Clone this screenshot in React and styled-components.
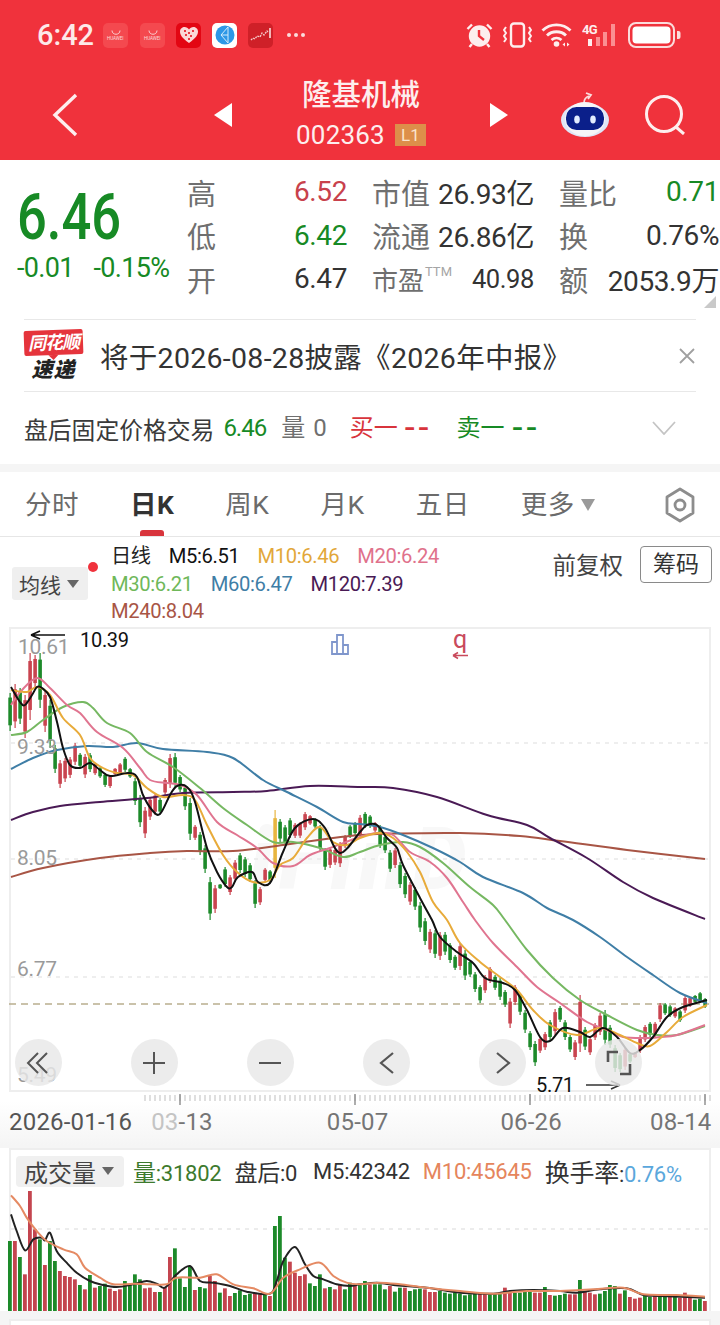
import React from 'react';
import styled, { createGlobalStyle } from 'styled-components';

const GREEN = '#178a25';
const RED = '#c8414c';
const FONT = 'Roboto, "Noto Sans CJK SC", sans-serif';

const GlobalStyle = createGlobalStyle`
  html, body { margin: 0; padding: 0; background: #fff; }
  * { box-sizing: border-box; }
`;

const Page = styled.div`
  width: 720px;
  height: 1325px;
  overflow: hidden;
  background: #fff;
  font-family: ${FONT};
  color: #333;
`;

/* header */
const Header = styled.header`
  background: #f0323c;
  color: #fff;
  height: 160px;
`;
const StatusBar = styled.div`
  height: 70px;
  display: flex;
  align-items: center;
  padding-left: 37px;
`;
const Time = styled.span`
  font-size: 29px;
  font-weight: 500;
  line-height: 34px;
  color: #fde9e9;
  width: 66px;
`;
const AppIcon = styled.div`
  width: 25px;
  height: 25px;
  border-radius: 5px;
  margin-right: ${p => p.$gap}px;
  background: ${p => p.$bg};
  display: flex;
  flex-direction: column;
  align-items: center;
  justify-content: center;
  flex: none;
`;
const HwText = styled.span`
  font-size: 5px;
  line-height: 6px;
  color: #fbdcdc;
  transform: scaleX(.9);
`;
const Dots = styled.span`
  display: flex;
  gap: 3px;
  width: 176px;
  margin-left: 1px;
  span {
    width: 4px;
    height: 4px;
    border-radius: 50%;
    background: #fbdcdc;
  }
`;
const StatusIcons = styled.div`
  display: flex;
  align-items: center;
  gap: 9.5px;
  margin-left: 3px;
`;
const NavBar = styled.nav`
  height: 90px;
  display: flex;
  align-items: center;
  padding-left: 52px;
`;
const BackIcon = styled.svg`
  margin-right: 136px;
  flex: none;
`;
const Tri = styled.div`
  width: 0;
  height: 0;
  flex: none;
  border-top: 12px solid transparent;
  border-bottom: 12px solid transparent;
  border-${p => (p.$left ? 'right' : 'left')}: 18px solid #fff;
`;
const TitleBlock = styled.div`
  width: 258px;
  display: flex;
  flex-direction: column;
  align-items: center;
  margin-top: -6px;
`;
const Title = styled.div`
  font-size: 29.5px;
  line-height: 40px;
  font-weight: 500;
  color: #fdeeee;
  margin-bottom: 5px;
`;
const CodeRow = styled.div`
  display: flex;
  align-items: center;
  gap: 10px;
  height: 30px;
`;
const Code = styled.span`
  font-size: 26px;
  color: #fdeeee;
  letter-spacing: .2px;
`;
const Badge = styled.span`
  width: 31px;
  height: 22px;
  background: #dd8f4a;
  color: #fbe3cc;
  font-size: 17px;
  line-height: 22px;
  text-align: center;
`;
const RobotIcon = styled.svg`
  margin-left: 53px;
  flex: none;
`;
const SearchIcon = styled.svg`
  margin-left: 36px;
  flex: none;
`;

/* quote */
const Quote = styled.section`
  position: relative;
  height: 159px;
  display: flex;
  padding: 10px 0 0 17px;
`;
const PriceBlock = styled.div`
  width: 170px;
  color: ${GREEN};
`;
const Price = styled.div`
  font-size: 64px;
  line-height: 68px;
  font-weight: 500;
  margin-top: 14px;
  transform: scaleX(.82);
  transform-origin: left center;
`;
const ChangeRow = styled.div`
  display: flex;
  gap: 20px;
  font-size: 27px;
  line-height: 30px;
  margin-top: 1px;
  letter-spacing: -.7px;
`;
const StatGrid = styled.div`
  display: grid;
  grid-template-columns: 160px 162px 160px;
  grid-auto-rows: 43.5px;
  column-gap: 25px;
`;
const Stat = styled.div`
  display: flex;
  justify-content: space-between;
  align-items: center;
`;
const StatLabel = styled.span`
  font-size: ${p => p.$size || 29}px;
  color: #6f6f6f;
  display: flex;
  align-items: flex-start;
`;
const Sup = styled.span`
  font-size: 13px;
  line-height: 24px;
  color: #a5a5a5;
  margin-left: 1px;
`;
const StatValue = styled.span`
  font-size: ${p => p.$size || 28}px;
  letter-spacing: -.4px;
  color: ${p => p.$color || '#333'};
`;
const Fold = styled.div`
  position: absolute;
  right: 4px;
  bottom: 11px;
  width: 0;
  height: 0;
  border-left: 12px solid transparent;
  border-bottom: 12px solid #c9c9c9;
`;
const Row = styled.div`
  margin: 0 24px;
  border-top: 1px solid #e8e8e8;
  height: ${p => p.$h}px;
  display: flex;
  align-items: center;
`;
const Logo = styled.div`
  width: 59px;
  height: 52px;
  margin-right: 17px;
  display: flex;
  flex-direction: column;
  align-items: center;
`;
const LogoTop = styled.div`
  position: relative;
  width: 59px;
  height: 25px;
  background: #e5343c;
  border-radius: 2px;
  transform: rotate(-2deg);
  color: #fff;
  font-size: 18px;
  line-height: 25px;
  font-weight: 700;
  font-style: italic;
  text-align: center;
  letter-spacing: -1px;
  &::after {
    content: '';
    position: absolute;
    left: 24px;
    bottom: -5px;
    border-top: 5px solid #e5343c;
    border-left: 5px solid transparent;
    border-right: 5px solid transparent;
  }
`;
const LogoBottom = styled.div`
  color: #222;
  font-size: 21px;
  line-height: 26px;
  margin-top: 2px;
  font-weight: 900;
  font-style: italic;
  letter-spacing: 1px;
`;
const NoticeText = styled.div`
  font-size: 28.5px;
  color: #333;
  letter-spacing: .3px;
  flex: 1;
  white-space: nowrap;
`;
const AfterLabel = styled.span`
  font-size: 23.8px;
  color: #3a3a3a;
`;
const AfterValue = styled.span`
  font-size: ${p => p.$size || 24}px;
  line-height: 1;
  margin-left: ${p => p.$gap}px;
  color: ${p => p.$color};
  letter-spacing: ${p => p.$ls || 0}px;
`;
const Chevron = styled.svg`
  margin-left: auto;
  margin-right: 20px;
`;
const Band = styled.div`
  height: 8px;
  background: #f5f5f5;
`;

/* tabs */
const Tabs = styled.div`
  height: 65px;
  border-bottom: 1px solid #e6e6e6;
  display: flex;
  align-items: center;
  padding: 2px 24px 0 25px;
  gap: 51px;
`;
const Tab = styled.div`
  position: relative;
  font-size: 26.5px;
  letter-spacing: .5px;
  line-height: 62px;
  color: ${p => (p.$active ? '#333' : '#6b6b6b')};
  font-weight: ${p => (p.$active ? 700 : 400)};
  display: flex;
  align-items: center;
  &::after {
    content: '';
    display: ${p => (p.$active ? 'block' : 'none')};
    position: absolute;
    left: 10px;
    bottom: 0;
    width: 24px;
    height: 6px;
    border-radius: 3px 3px 0 0;
    background: #d8343c;
  }
`;
const TabCaret = styled.i`
  border-top: 12px solid #9a9a9a;
  border-left: 7.5px solid transparent;
  border-right: 7.5px solid transparent;
  margin-left: 6px;
`;
const HexIcon = styled.svg`
  margin-left: auto;
  margin-right: 0;
`;

/* indicators */
const Indicators = styled.div`
  position: relative;
  height: 90px;
  display: flex;
  padding: 6px 8px 0 12px;
`;
const Picker = styled.div`
  width: 76px;
  height: 33px;
  margin-top: 24px;
  background: #efefef;
  border-radius: 3px;
  display: flex;
  align-items: center;
  padding-left: 7px;
  font-size: 21px;
  color: #444;
`;
const Caret = styled.i`
  border-top: 8px solid #666;
  border-left: 6px solid transparent;
  border-right: 6px solid transparent;
  margin-left: 6px;
`;
const RedDot = styled.i`
  position: absolute;
  left: 88px;
  top: 25px;
  width: 10px;
  height: 10px;
  border-radius: 50%;
  background: #f0323c;
`;
const Legend = styled.div`
  margin-left: 23px;
  flex: 1;
`;
const LegendRow = styled.div`
  display: flex;
  gap: 18px;
  height: 27.5px;
  line-height: 27.5px;
  white-space: nowrap;
`;
const LegendItem = styled.span`
  font-size: 20.2px;
  letter-spacing: -.35px;
  color: ${p => p.$color};
`;
const Adjust = styled.span`
  font-size: 23.5px;
  color: #444;
  margin-top: 7px;
  margin-right: 17px;
  line-height: 32px;
`;
const ChipBtn = styled.div`
  width: 72px;
  height: 37px;
  border: 1px solid #8a8a8a;
  border-radius: 4px;
  font-size: 23px;
  line-height: 35px;
  text-align: center;
  margin-top: 3px;
  color: #333;
`;

/* chart */
const ChartBox = styled.div`
  position: relative;
  margin: 0 9px;
  height: 465px;
  border: 2px solid #eeeeee;
  svg { display: block; overflow: visible; position: relative; }
`;
const Overlay = styled.span`
  position: absolute;
  left: ${p => p.$x - 11}px;
  top: ${p => p.$y - 629}px;
  transform: translateY(-50%);
  font-size: ${p => p.$size || 21}px;
  line-height: 1;
  color: ${p => p.$color || '#9a9a9a'};
  letter-spacing: -.3px;
  white-space: nowrap;
`;
const Watermark = styled(Overlay)`
  font-style: italic;
  font-weight: 900;
  font-size: 86px;
  color: #f8f8f8;
  letter-spacing: 6px;
`;
const Controls = styled.div`
  position: absolute;
  left: 3.5px;
  top: 410px;
  display: flex;
  gap: 69.2px;
`;
const RoundBtn = styled.div`
  width: 47px;
  height: 47px;
  border-radius: 50%;
  background: rgba(232, 232, 232, .82);
  display: flex;
  align-items: center;
  justify-content: center;
`;
const Axis = styled.div`
  height: 55px;
  background: linear-gradient(#fff 15%, #f5f5f5 95%);
  svg { display: block; margin-top: 1px; }
`;
const Dates = styled.div`
  display: flex;
  margin-top: 3px;
  font-size: 24px;
  line-height: 28px;
  color: #757575;
  letter-spacing: .2px;
`;
const DateLabel = styled.span`
  margin-left: ${p => p.$gap}px;
  color: ${p => p.$color || 'inherit'};
`;
const Faded = styled.span`
  color: #c4c4c4;
`;
const VolumeBox = styled.div`
  margin: 0 9px;
  height: 163px;
  border: 2px solid #eeeeee;
  border-bottom: 0;
  svg { display: block; overflow: visible; }
`;
const VolumeHead = styled.div`
  height: 39px;
  display: flex;
  align-items: center;
  padding-top: 3px;
  padding-left: 5px;
  font-size: 22px;
  white-space: nowrap;
`;
const VolumePicker = styled.div`
  width: 108px;
  height: 31px;
  background: #f0f0f0;
  border-radius: 4px;
  padding-left: 8px;
  margin-right: 9px;
  display: flex;
  align-items: center;
  font-size: 24px;
  color: #444;
`;
const VolText = styled.span`
  margin-right: ${p => p.$gap || 13}px;
  letter-spacing: -.25px;
  color: ${p => p.$color || '#333'};
`;
const VolCn = styled.span`
  font-size: ${p => p.$size || 23}px;
`;
const VolRate = styled.span`
  color: #5aa7dc;
`;
const NextPanel = styled.div`
  margin: 8px 9px 0;
  height: 20px;
  border: 2px solid #eeeeee;
  background: #fff;
`;
const BottomBand = styled.div`
  background: #f5f5f5;
  height: 30px;
  overflow: hidden;
`;

const candles = [
  [693,731,'g'],[684,728,'r'],[688,724,'g'],[695,738,'r'],[653,720,'r'],[655,688,'r'],[653,708,'g'],[690,732,'r'],[700,748,'g'],[745,773,'g'],
  [760,788,'r'],[758,782,'r'],[757,778,'r'],[743,765,'r'],[753,768,'g'],[754,778,'r'],[753,772,'g'],[763,775,'r'],[767,778,'g'],[773,787,'g'],
  [775,788,'r'],[768,775,'r'],[763,775,'r'],[757,772,'g'],[768,778,'g'],[778,805,'g'],[795,827,'g'],[807,838,'r'],[797,820,'r'],[793,815,'r'],
  [798,814,'g'],[778,795,'r'],[754,788,'r'],[753,788,'g'],[775,792,'g'],[785,810,'g'],[798,840,'g'],[825,840,'r'],[832,855,'g'],[845,873,'g'],
  [877,920,'g'],[885,913,'r'],[884,889,'g'],[867,887,'g'],[875,895,'r'],[860,882,'r'],[853,873,'g'],[857,877,'g'],[863,882,'g'],[880,908,'g'],
  [887,905,'r'],[868,882,'r'],[870,882,'g'],[810,878,'y'],[819,842,'g'],[825,845,'g'],[818,838,'g'],[823,838,'r'],[822,838,'r'],[812,830,'r'],
  [815,825,'r'],[818,828,'g'],[825,852,'g'],[848,870,'g'],[847,868,'r'],[848,865,'r'],[842,867,'r'],[835,848,'r'],[825,838,'g'],[822,835,'g'],
  [815,838,'r'],[812,828,'g'],[815,828,'g'],[822,832,'r'],[825,848,'g'],[835,853,'g'],[850,872,'g'],[848,868,'r'],[862,888,'g'],[873,898,'g'],
  [882,905,'r'],[887,910,'g'],[902,932,'g'],[918,945,'g'],[929,953,'r'],[930,958,'g'],[932,960,'r'],[932,955,'g'],[943,963,'g'],[955,970,'g'],
  [943,970,'r'],[950,980,'g'],[960,977,'g'],[972,992,'g'],[985,1003,'g'],[975,993,'r'],[967,983,'r'],[975,990,'g'],[978,1000,'g'],[990,1007,'g'],
  [998,1028,'r'],[985,1005,'r'],[993,1015,'g'],[1010,1033,'g'],[1031,1050,'g'],[1041,1066,'g'],[1037,1053,'r'],[1032,1050,'r'],[1020,1040,'g'],[1009,1035,'r'],
  [1006,1022,'g'],[1020,1040,'g'],[1035,1052,'g'],[1040,1060,'r'],[995,1052,'r'],[1027,1050,'g'],[1037,1055,'r'],[1023,1040,'r'],[1013,1035,'r'],[1010,1045,'g'],
  [1025,1048,'g'],[1045,1072,'g'],[1053,1072,'g'],[1047,1070,'r'],[1053,1063,'g'],[1052,1058,'r'],[1035,1053,'r'],[1025,1042,'r'],[1022,1037,'g'],[1022,1037,'r'],
  [1003,1022,'r'],[1003,1015,'g'],[1005,1017,'g'],[1007,1018,'r'],[1010,1022,'g'],[996,1013,'r'],[997,1007,'r'],[995,1003,'g'],[992,1003,'g'],[998,1008,'g'],
];

const lines = [
  { color: '#a85545', pts: '11,877 43,868 100,858 150,853 187,851 233,851 283,845 333,838 360,835 393,833.5 460,833 520,836 560,841 627,850 705,859' },
  { color: '#4a1a55', pts: '11,820 33,812 60,806 100,802 147,798 183,793 233,792 267,791 310,786 360,787 393,788 437,797 487,815 527,825 550,838 587,858 623,882 653,898 705,919' },
  { color: '#3f7ea6', pts: '11,769 33,758 57,750 87,746 113,747 137,743 163,749 207,752 233,758 263,780 287,792 317,807 343,822 360,824 380,827 403,835 433,848 460,862 483,877 523,893 547,908 573,920 600,937 627,957 653,975 680,993 707,1003' },
  { color: '#76b862', pts: '11,735 27,732 43,720 63,707 83,702 93,708 107,723 130,733 147,752 173,767 200,788 223,808 247,825 273,842 293,842 320,848 343,857 360,852 380,845 403,842 420,847 443,863 470,887 493,905 505,920 527,950 553,978 580,1000 607,1015 637,1030 657,1035 677,1035 705,1026' },
  { color: '#e07590', pts: '11,705 22,690 37,678 50,688 67,705 80,713 97,732 123,748 140,768 150,780 167,783 180,785 197,795 217,822 237,835 257,848 273,863 293,866 310,855 330,848 360,837 377,833 393,835 410,852 430,862 447,878 463,902 475,920 493,943 517,967 537,987 560,1003 587,1022 607,1030 623,1037 647,1038 660,1037 677,1035 705,1025' },
  { color: '#e8ab3a', pts: '11,690 27,692 37,687 50,695 63,718 80,735 90,758 103,768 117,773 133,775 147,788 163,797 183,795 195,800 207,825 223,855 237,872 253,882 270,880 280,865 293,858 307,838 320,827 333,842 347,845 360,838 380,833 393,838 407,852 420,872 433,902 447,920 460,943 480,962 500,977 517,990 533,1010 550,1025 577,1035 600,1028 620,1035 637,1043 650,1046 667,1032 683,1017 707,1005' },
  { color: '#111', pts: '11,687 20,702 25,705 32,695 37,687 42,688 50,697 57,722 63,748 70,765 80,768 90,763 100,770 110,776 128,773 137,777 143,795 152,810 160,814 170,795 177,786 187,787 195,802 207,848 217,872 227,887 232,887 238,877 252,872 258,882 270,883 283,852 295,828 313,819 325,828 340,853 360,832 367,825 377,825 387,838 397,848 403,865 420,898 432,920 440,937 457,952 473,963 485,978 503,983 515,990 527,1010 540,1037 550,1041 563,1028 580,1032 590,1037 603,1028 617,1037 630,1053 640,1050 653,1037 667,1017 683,1007 707,1000' },
];

const volTops = [
  300,300,348,400,150,265,295,372,300,360, 390,405,408,415,432,445,402,440,435,428,
  443,450,445,420,430,400,415,442,440,453, 453,440,348,322,412,438,375,447,438,442,
  405,420,455,442,465,456,448,462,458,455, 460,457,465,255,225,350,362,395,405,400,
  427,435,400,442,438,445,430,445,425,435, 432,
  420,430,430,430,445,435,452,440,440,450, 445,443,445,453,453,450,455,458,455,458,
  463,460,455,458,458,460,458,455,440,452, 455,455,452,450,455,455,438,462,464,462,
  458,460,460,417,452,455,460,458,450,432, 435,458,448,468,473,470,465,468,465,465,
  468,468,462,470,455,470,476,473,480,
];
const volColors = 'grgrrrgrggrrrrgrgrggrrrggggrrrgrrggggrggrrgrrggggrrgrgggrrrrgggrgrrggr' +
  'ggrgggrggrgggrrrggggggggrrgggrrggggrrgrgggrrgrrrggggrgrrrggrggrgrrrgg';

const volLines = [
  { color: '#222', pts: [[33,220],[50,270],[75,328],[100,295],[125,290],[135,298],[150,275],[170,330],[200,365],[230,395],[270,420],[300,430],[350,438],[400,430],[440,420],[470,428],[495,440],[530,400],[570,375],[600,420],[640,425],[690,435],[740,452],[810,458],[830,420],[850,360],[885,318],[915,370],[940,405],[970,415],[1010,430],[1050,435],[1080,430],[1130,425],[1180,432],[1280,440],[1380,455],[1480,458],[1530,450],[1600,447],[1680,450],[1730,455],[1800,445],[1880,442],[1930,462],[1980,465],[2115,470]] },
  { color: '#e58a63', pts: [[33,163],[60,195],[80,230],[110,270],[140,300],[190,325],[230,340],[255,380],[300,410],[340,430],[400,428],[450,430],[500,430],[530,410],[600,410],[650,400],[700,430],[760,442],[810,458],[850,410],[900,385],[960,365],[1000,405],[1040,425],[1080,430],[1140,425],[1200,430],[1280,440],[1380,450],[1480,458],[1580,450],[1680,450],[1780,445],[1870,440],[1930,460],[2030,462],[2115,467]] },
];

const smooth = pts => {
  let d = `M${pts[0][0]} ${pts[0][1]}`;
  for (let i = 0; i < pts.length - 1; i++) {
    const p0 = pts[i - 1] || pts[i];
    const p1 = pts[i];
    const p2 = pts[i + 1];
    const p3 = pts[i + 2] || p2;
    const c1x = p1[0] + (p2[0] - p0[0]) / 6;
    const c1y = p1[1] + (p2[1] - p0[1]) / 6;
    const c2x = p2[0] - (p3[0] - p1[0]) / 6;
    const c2y = p2[1] - (p3[1] - p1[1]) / 6;
    d += `C${c1x.toFixed(1)} ${c1y.toFixed(1)} ${c2x.toFixed(1)} ${c2y.toFixed(1)} ${p2[0]} ${p2[1]}`;
  }
  return d;
};
const parsePts = s => s.split(' ').map(p => p.split(',').map(Number));
const candleColor = { g: '#1d8a2a', r: '#c9444f', y: '#e8b640' };

function KChart() {
  return (
    <svg width="698" height="461" viewBox="11 629 698 461">
      <g stroke="#e9e9e9" strokeWidth="1.5" strokeDasharray="4 5">
        <line x1="11" x2="709" y1="743" y2="743" />
        <line x1="11" x2="709" y1="859" y2="859" />
        <line x1="11" x2="709" y1="977" y2="977" />
      </g>
      <line x1="9" x2="709" y1="1004" y2="1004" stroke="#b9ae8e" strokeWidth="1.6" strokeDasharray="7 5" />
      {candles.map(([t, b, c], i) => {
        const x = 10 + i * 5;
        const h = b - t;
        return (
          <g key={i} fill={candleColor[c]}>
            <rect x={x - 0.5} y={t} width="1.2" height={h} />
            <rect x={x - 1.7} y={t + h * 0.12} width="3.6" height={h * 0.73} />
          </g>
        );
      })}
      {lines.map(l => (
        <path key={l.color} d={smooth(parsePts(l.pts))} fill="none" stroke={l.color} strokeWidth="2" strokeLinejoin="round" />
      ))}
      <g stroke="#111" strokeWidth="1.6" fill="none">
        <path d="M31 635H65M31 635l9-4M31 635l9 4" />
      </g>
      <g stroke="#333" strokeWidth="1.6" fill="none">
        <path d="M586 1085H620M620 1085l-9-4M620 1085l-9 4" />
      </g>
      <g fill="none" stroke="#7f96cc" strokeWidth="1.8">
        <path d="M332 654V642H337V654ZM337 654V635H343V654ZM343 654V645H348V654Z" />
      </g>
      <path d="M453 655.5H468M453 655.5l5-3M453 655.5l5 3" fill="none" stroke="#c94a5c" strokeWidth="1.5" />
    </svg>
  );
}

function VolumeChart() {
  return (
    <svg width="698" height="122" viewBox="11 1188 698 122">
      <line x1="11" x2="709" y1="1228" y2="1228" stroke="#e6e6e6" strokeWidth="1.5" strokeDasharray="4 5" />
      {volTops.map((zy, i) => {
        const top = 1140 + zy / 3;
        return <rect key={i} x={8 + i * 5} y={top} width="3.8" height={1310 - top} fill={volColors[i] === 'g' ? '#1d8a2a' : '#c4454f'} />;
      })}
      {volLines.map(l => (
        <path key={l.color} d={smooth(l.pts.map(([x, y]) => [x / 3, 1140 + y / 3]))} fill="none" stroke={l.color} strokeWidth="2" />
      ))}
    </svg>
  );
}

function Ticks() {
  const ticks = [];
  for (let x = 145; x <= 711; x += 5) ticks.push(x);
  return (
    <svg width="720" height="12">
      {ticks.map(x => (
        <line key={x} x1={x} x2={x} y1="2" y2="8" stroke="#d2d2d2" strokeWidth="1.4" />
      ))}
      {[180, 355, 530, 705].map(x => (
        <line key={x} x1={x} x2={x} y1="1" y2="12" stroke="#8a8a8a" strokeWidth="1.4" />
      ))}
    </svg>
  );
}

const statusStroke = '#fdeeee';

function StatusRight() {
  return (
    <StatusIcons>
      <svg width="27" height="26" viewBox="0 0 27 26" fill="none" stroke={statusStroke} strokeWidth="2.4">
        <circle cx="13.5" cy="14" r="9.5" fill="#fdeeee" />
        <path d="M13 8v6l5 4" stroke="#f0323c" />
        <path d="M1.5 7 6 2.5M25.5 7 21 2.5M6 22l-2.500 3M21 22l2.500 3" />
      </svg>
      <svg width="29" height="26" viewBox="0 0 29 26" fill="none" stroke={statusStroke} strokeWidth="2">
        <rect x="8" y="1.500" width="13" height="23" rx="3" strokeWidth="2.4" />
        <path d="M3 5l-2 3 2 3-2 3 2 3-2 3M26 5l2 3-2 3 2 3-2 3 2 3" />
      </svg>
      <svg width="31" height="26" viewBox="0 0 31 26" fill="none" stroke={statusStroke} strokeWidth="2.8">
        <path d="M1.500 8.500C9 1 22 1 29.500 8.500M6 13.500C11 8.500 20 8.500 25 13.500M10.500 18c3-2.500 7-2.500 10 0" />
        <circle cx="15.500" cy="22" r="2.800" fill="#fdeeee" stroke="none" />
        <path d="M24 20.500l-2.500 2 2.500 2zM26 20.500l2.500 2-2.500 2z" fill="#fdeeee" stroke="none" />
      </svg>
      <svg width="36" height="26" viewBox="0 0 36 26">
        <text x="0" y="12" fontFamily="Roboto" fontWeight="700" fontSize="13" fill="#fdeeee" letterSpacing="-.6">4G</text>
        <rect x="6" y="17" width="4" height="7" fill="#fdeeee" />
        <rect x="14" y="15" width="4" height="9" fill="#fb8f92" />
        <rect x="21" y="10" width="4" height="14" fill="#fb8f92" />
        <rect x="29" y="2" width="4" height="22" fill="#fb8f92" />
      </svg>
      <svg width="54" height="26" viewBox="0 0 54 26" fill="none" style={{ marginLeft: 1 }}>
        <rect x="1" y="1" width="45" height="24" rx="7" stroke="#fbdcdc" strokeWidth="2" />
        <rect x="4.500" y="4.500" width="38" height="17" rx="4" fill="#fff" />
        <path d="M49 9h1.500a2 2 0 0 1 2 2v4a2 2 0 0 1-2 2H49z" fill="#fbdcdc" />
      </svg>
    </StatusIcons>
  );
}

export default function App() {
  return (
    <Page>
      <GlobalStyle />
      <Header>
        <StatusBar>
          <Time>6:42</Time>
          <AppIcon $bg="#f4494f" $gap={12}>
            <svg width="10" height="5" viewBox="0 0 10 5" fill="none" stroke="#fbdcdc" strokeWidth=".9"><path d="M1 0.500c0 5 8 5 8 0" /></svg>
            <HwText>HUAWEI</HwText>
          </AppIcon>
          <AppIcon $bg="#f4494f" $gap={11}>
            <svg width="10" height="5" viewBox="0 0 10 5" fill="none" stroke="#fbdcdc" strokeWidth=".9"><path d="M1 0.500c0 5 8 5 8 0" /></svg>
            <HwText>HUAWEI</HwText>
          </AppIcon>
          <AppIcon $bg="#e30613" $gap={11}>
            <svg width="20" height="18" viewBox="0 0 20 18">
              <path d="M10 17C3 12 1 9 1 5.500 1 2.500 3.500 1 5.500 1 7.500 1 9 2 10 3.500 11 2 12.500 1 14.500 1 16.500 1 19 2.500 19 5.500 19 9 17 12 10 17Z" fill="#fbd7d7" />
              <path d="M5 5h2M9 7h2M13 5h2M6 9h2M11 10h2M9 13h2" stroke="#e30613" strokeWidth="1.300" />
            </svg>
          </AppIcon>
          <AppIcon $bg="#fff" $gap={11}>
            <svg width="20" height="20" viewBox="0 0 20 20">
              <circle cx="10" cy="10" r="9.500" fill="#2d97e6" />
              <path d="M13 2 6 10l7 8M13 2v16M6 10h7" stroke="#d4ecfb" strokeWidth="1" fill="none" />
            </svg>
          </AppIcon>
          <AppIcon $bg="#cf2028" $gap={13}>
            <svg width="22" height="16" viewBox="0 0 22 16" fill="none" stroke="#f6c9c9" strokeWidth="1.300">
              <path d="M1 13l2-2 2 1 2-3 3 1 2-4 2 2 3-4 1 1" strokeDasharray="2 1" />
              <path d="M20 1v10" strokeWidth="1.800" />
            </svg>
          </AppIcon>
          <Dots><span /><span /><span /></Dots>
          <StatusRight />
        </StatusBar>
        <NavBar>
          <BackIcon width="26" height="44" viewBox="0 0 26 44" fill="none" stroke="#fdeeee" strokeWidth="3.400">
            <path d="M24 2 3 22l21 20" />
          </BackIcon>
          <Tri $left />
          <TitleBlock>
            <Title>隆基机械</Title>
            <CodeRow>
              <Code>002363</Code>
              <Badge>L1</Badge>
            </CodeRow>
          </TitleBlock>
          <Tri />
          <RobotIcon width="48" height="46" viewBox="0 0 48 46">
            <path d="M23 11c0-4 2-6 5-7M25 1l5 2-3 4" fill="none" stroke="#fbdcdc" strokeWidth="1.800" />
            <ellipse cx="24" cy="28" rx="24" ry="17" fill="#dfe6f7" />
            <ellipse cx="24" cy="27" rx="20" ry="17" fill="#f6f5f8" />
            <rect x="5" y="15" width="38" height="23" rx="10.500" fill="#0b1f8a" />
            <ellipse cx="16" cy="27.500" rx="2.800" ry="4" fill="#e3ecff" />
            <ellipse cx="32" cy="27.500" rx="2.800" ry="4" fill="#e3ecff" />
          </RobotIcon>
          <SearchIcon width="40" height="40" viewBox="0 0 40 40" fill="none" stroke="#fdeeee" strokeWidth="3">
            <circle cx="19" cy="19" r="17.500" />
            <path d="M31 32l8 7" />
          </SearchIcon>
        </NavBar>
      </Header>

      <Quote>
        <PriceBlock>
          <Price>6.46</Price>
          <ChangeRow>
            <span>-0.01</span>
            <span>-0.15%</span>
          </ChangeRow>
        </PriceBlock>
        <StatGrid>
          <Stat><StatLabel>高</StatLabel><StatValue $color={RED}>6.52</StatValue></Stat>
          <Stat><StatLabel>市值</StatLabel><StatValue>26.93亿</StatValue></Stat>
          <Stat><StatLabel>量比</StatLabel><StatValue $color={GREEN}>0.71</StatValue></Stat>
          <Stat><StatLabel>低</StatLabel><StatValue $color={GREEN}>6.42</StatValue></Stat>
          <Stat><StatLabel>流通</StatLabel><StatValue>26.86亿</StatValue></Stat>
          <Stat><StatLabel>换</StatLabel><StatValue>0.76%</StatValue></Stat>
          <Stat><StatLabel>开</StatLabel><StatValue>6.47</StatValue></Stat>
          <Stat><StatLabel $size={26}>市盈<Sup>TTM</Sup></StatLabel><StatValue $size={25.5}>40.98</StatValue></Stat>
          <Stat><StatLabel>额</StatLabel><StatValue>2053.9万</StatValue></Stat>
        </StatGrid>
        <Fold />
      </Quote>

      <Row $h={72}>
        <Logo>
          <LogoTop>同花顺</LogoTop>
          <LogoBottom>速递</LogoBottom>
        </Logo>
        <NoticeText>将于2026-08-28披露《2026年中报》</NoticeText>
        <svg width="18" height="18" viewBox="0 0 18 18" stroke="#a0a0a0" strokeWidth="1.800"><path d="M2 2l14 14M16 2 2 16" /></svg>
      </Row>
      <Row $h={73}>
        <AfterLabel>盘后固定价格交易</AfterLabel>
        <AfterValue $gap={9} $color={GREEN} $ls={-1}>6.46</AfterValue>
        <AfterValue $gap={15} $color="#6f6f6f">量</AfterValue>
        <AfterValue $gap={8} $color="#6f6f6f">0</AfterValue>
        <AfterValue $gap={23} $color="#d8343c">买一</AfterValue>
        <AfterValue $gap={7} $size={36} $color="#d8343c" $ls={4}>--</AfterValue>
        <AfterValue $gap={24} $color={GREEN}>卖一</AfterValue>
        <AfterValue $gap={8} $size={36} $color={GREEN} $ls={4}>--</AfterValue>
        <Chevron width="24" height="14" viewBox="0 0 24 14" fill="none" stroke="#c4c4c4" strokeWidth="1.800">
          <path d="M1 1l11 12L23 1" />
        </Chevron>
      </Row>
      <Band />

      <Tabs>
        <Tab>分时</Tab>
        <Tab $active>日K</Tab>
        <Tab>周K</Tab>
        <Tab>月K</Tab>
        <Tab>五日</Tab>
        <Tab>更多<TabCaret /></Tab>
        <HexIcon width="32" height="36" viewBox="0 0 32 36" fill="none" stroke="#8d8d8d" strokeWidth="2.800">
          <path d="M16 2l13 8v16l-13 8-13-8V10z" strokeLinejoin="round" />
          <circle cx="16" cy="18" r="5" />
        </HexIcon>
      </Tabs>

      <Indicators>
        <Picker>均线<Caret /></Picker>
        <RedDot />
        <Legend>
          <LegendRow>
            <LegendItem $color="#222">日线</LegendItem>
            <LegendItem $color="#111">M5:6.51</LegendItem>
            <LegendItem $color="#e2a73a">M10:6.46</LegendItem>
            <LegendItem $color="#e0718b">M20:6.24</LegendItem>
          </LegendRow>
          <LegendRow>
            <LegendItem $color="#6fb85a">M30:6.21</LegendItem>
            <LegendItem $color="#3f7ea6">M60:6.47</LegendItem>
            <LegendItem $color="#4a1a55">M120:7.39</LegendItem>
          </LegendRow>
          <LegendRow>
            <LegendItem $color="#a85545">M240:8.04</LegendItem>
          </LegendRow>
        </Legend>
        <Adjust>前复权</Adjust>
        <ChipBtn>筹码</ChipBtn>
      </Indicators>

      <ChartBox>
        <Watermark $x={250} $y={860}>iFinD</Watermark>
        <KChart />
        <Overlay $x={18} $y={647}>10.61</Overlay>
        <Overlay $x={17} $y={747}>9.33</Overlay>
        <Overlay $x={17} $y={858}>8.05</Overlay>
        <Overlay $x={17} $y={969}>6.77</Overlay>
        <Overlay $x={17} $y={1075}>5.49</Overlay>
        <Overlay $x={80} $y={640} $size={20} $color="#111">10.39</Overlay>
        <Overlay $x={536} $y={1085} $size={20} $color="#111">5.71</Overlay>
        <Overlay $x={453} $y={639} $size={25} $color="#c94a5c">q</Overlay>
        <Controls>
          <RoundBtn>
            <svg width="24" height="24" viewBox="0 0 24 24" fill="none" stroke="#555" strokeWidth="2"><path d="M12 2 2 12l10 10M21 2 11 12l10 10" /></svg>
          </RoundBtn>
          <RoundBtn>
            <svg width="24" height="24" viewBox="0 0 24 24" fill="none" stroke="#555" strokeWidth="2"><path d="M12 1v22M1 12h22" /></svg>
          </RoundBtn>
          <RoundBtn>
            <svg width="24" height="24" viewBox="0 0 24 24" fill="none" stroke="#555" strokeWidth="2"><path d="M1 12h22" /></svg>
          </RoundBtn>
          <RoundBtn>
            <svg width="16" height="24" viewBox="0 0 16 24" fill="none" stroke="#555" strokeWidth="2.200"><path d="M14 2 2 12l12 10" /></svg>
          </RoundBtn>
          <RoundBtn>
            <svg width="16" height="24" viewBox="0 0 16 24" fill="none" stroke="#555" strokeWidth="2.200"><path d="M2 2l12 10L2 22" /></svg>
          </RoundBtn>
          <RoundBtn>
            <svg width="26" height="26" viewBox="0 0 26 26" fill="none" stroke="#555" strokeWidth="2.600"><path d="M2 12V2h10M24 14v10H14" /></svg>
          </RoundBtn>
        </Controls>
      </ChartBox>

      <Axis>
        <Ticks />
        <Dates>
          <DateLabel $gap={9} $color="#555">2026-01-16</DateLabel>
          <DateLabel $gap={19}><Faded>03</Faded>-13</DateLabel>
          <DateLabel $gap={114}>05-07</DateLabel>
          <DateLabel $gap={112}>06-26</DateLabel>
          <DateLabel $gap={88}>08-14</DateLabel>
        </Dates>
      </Axis>

      <VolumeBox>
        <VolumeHead>
          <VolumePicker>成交量<Caret /></VolumePicker>
          <VolText $color="#3d7a2d"><VolCn>量</VolCn>:31802</VolText>
          <VolText $gap={16}><VolCn>盘后</VolCn>:0</VolText>
          <VolText>M5:42342</VolText>
          <VolText $color="#e5855c">M10:45645</VolText>
          <VolText><VolCn $size={25}>换手率</VolCn>:<VolRate>0.76%</VolRate></VolText>
        </VolumeHead>
        <VolumeChart />
      </VolumeBox>
      <BottomBand>
        <NextPanel />
      </BottomBand>
    </Page>
  );
}
